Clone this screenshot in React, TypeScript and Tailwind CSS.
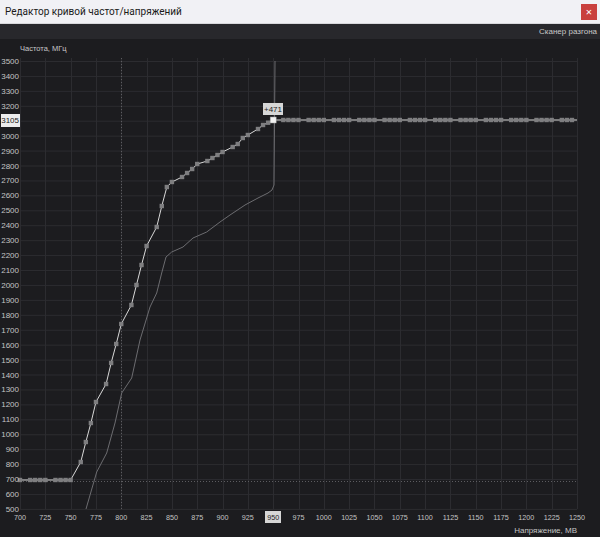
import React from "react";

const X = (mv: number) => 20 + (mv - 700) * (557 / 550);
const Y = (mhz: number) => 61 + (3500 - mhz) * 0.1493;

// [mV, pixel y] of the edited curve
const curve: [number, number][] = [
  [700, 480], [710, 480], [715, 480], [720, 480], [725, 480], [735, 480], [740, 480], [745, 480], [750, 480],
  [760, 462], [765, 442], [770, 423], [775, 402], [785, 384], [790, 363], [795, 344], [800, 324],
  [810, 305], [815, 285], [820, 265], [825, 246], [835, 227], [840, 206], [845, 187], [850, 182],
  [860, 177], [865, 173], [870, 169], [875, 164], [885, 161], [890, 158], [895, 155], [900, 152],
  [910, 147], [915, 144], [920, 138], [925, 135], [935, 129], [940, 125], [945, 122.7],
];

const flat: number[] = [];
for (let v = 960; v <= 1245; v += 5) {
  if (v % 25 !== 5) flat.push(v);
}

const base: [number, number][] = [
  [86, 509], [96.7, 472], [106.7, 453], [115, 423], [121.7, 393], [131.7, 378], [140, 340],
  [150, 307], [156.7, 293], [161.7, 273], [166, 257], [171.7, 252], [183, 247], [193, 238],
  [206.7, 232], [220, 222], [230, 215], [245, 205], [258, 198], [268, 193], [272, 190], [274, 185], [275, 61],
];

const yTicks: number[] = [];
for (let f = 3500; f >= 500; f -= 100) yTicks.push(f);
const xTicks: number[] = [];
for (let v = 700; v <= 1250; v += 25) xTicks.push(v);

const Chart = () => {
  const mainPts = [...curve.map(([v, y]) => `${X(v)},${y}`), `${X(950)},120`, `${X(1250)},120`].join(" ");
  return (
    <svg width="600" height="498" viewBox="0 39 600 498" className="block" style={{ fontFamily: '"Liberation Sans", Arial, sans-serif' }}>
      {/* grid */}
      {yTicks.map((f) => (
        <line key={f} x1={20} x2={577} y1={Y(f) + 0.5} y2={Y(f) + 0.5} stroke="#2c2c30" strokeWidth={1} />
      ))}
      {xTicks.map((v) => (
        <line key={v} x1={Math.round(X(v)) + 0.5} x2={Math.round(X(v)) + 0.5} y1={58} y2={509} stroke="#2c2c30" strokeWidth={1} />
      ))}
      <line x1={121.5} x2={121.5} y1={58} y2={509} stroke="#5c5c60" strokeDasharray="1 2" />
      <line x1={20} x2={577} y1={481.5} y2={481.5} stroke="#5c5c60" strokeDasharray="1 2" />

      {/* default curve */}
      <polyline points={base.map(([x, y]) => `${x},${y}`).join(" ")} fill="none" stroke="#6c6c70" strokeWidth={1} />

      {/* edited curve */}
      <polyline points={mainPts} fill="none" stroke="#d8d8d8" strokeWidth={1} />
      {curve.map(([v, y]) => (
        <rect key={v} x={X(v) - 2.2} y={y - 2.2} width={4.4} height={4.4} fill="#7e7e80" />
      ))}
      {flat.map((v) => (
        <rect key={v} x={X(v) - 2.2} y={120 - 2.2} width={4.4} height={4.4} fill="#7e7e80" />
      ))}
      <rect x={X(950) - 3} y={117} width={6} height={6} fill="#f2f2f2" stroke="#9a9a9a" strokeWidth={0.5} />

      {/* +471 tag */}
      <rect x={263} y={103} width={20} height={12} fill="#d6d6d6" />
      <text x={273} y={109.5} fontSize={8} fill="#222" textAnchor="middle" dominantBaseline="central">+471</text>

      {/* y labels */}
      <text x={20} y={48.5} fontSize={7.5} fill="#c8c8c8" dominantBaseline="central">Частота, МГц</text>
      {yTicks.map((f) =>
        f === 3100 ? null : (
          <text key={f} x={19} y={Y(f) + 0.5} fontSize={8} fill="#c4c4c4" textAnchor="end" dominantBaseline="central">{f}</text>
        )
      )}
      <rect x={1} y={114} width={19} height={13} fill="#ececec" />
      <text x={19} y={120.5} fontSize={8} fill="#1a1a1a" textAnchor="end" dominantBaseline="central">3105</text>

      {/* x labels */}
      {xTicks.map((v) =>
        v === 950 ? null : (
          <text key={v} x={X(v)} y={517} fontSize={7.2} fill="#c4c4c4" textAnchor="middle" dominantBaseline="central">{v}</text>
        )
      )}
      <rect x={265} y={511} width={16} height={12} fill="#d6d6d6" />
      <text x={X(950)} y={517} fontSize={7.2} fill="#222" textAnchor="middle" dominantBaseline="central">950</text>
      <text x={577} y={530} fontSize={8} fill="#c4c4c4" textAnchor="end" dominantBaseline="central">Напряжение, МВ</text>
    </svg>
  );
};

export default function App() {
  return (
    <div className="w-[600px] h-[537px] flex flex-col overflow-hidden bg-[#1c1c1f]">
      <div className="h-6 shrink-0 flex items-center justify-between bg-[#f1f1f5] border-b border-[#d8d8dc] pl-[5px] pr-[3px]">
        <span className="text-[10px] text-[#1a1a1a] font-['Roboto',sans-serif]">Редактор кривой частот/напряжений</span>
        <button className="w-4 h-4 bg-[#c9403e] text-white text-[11px] leading-none flex items-center justify-center">×</button>
      </div>
      <div className="h-[15px] shrink-0 flex items-center justify-end bg-[#28282c] pr-[3px]">
        <span className="text-[8px] text-[#c8c8c8] font-['Liberation_Sans',Arial,sans-serif]">Сканер разгона</span>
      </div>
      <div className="flex-1 flex">
        <Chart />
      </div>
    </div>
  );
}
